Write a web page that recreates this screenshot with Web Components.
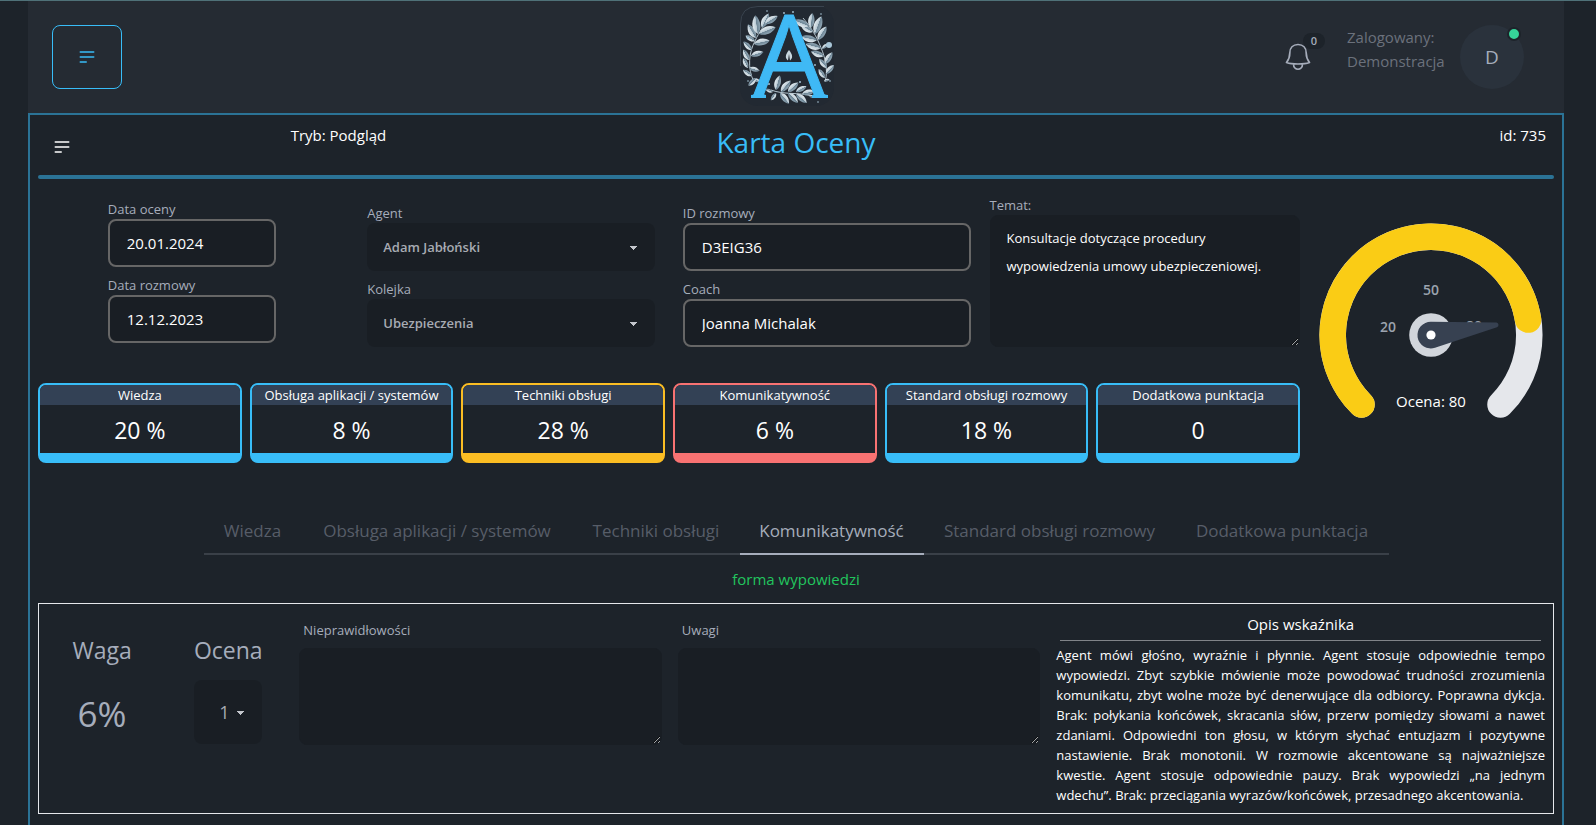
<!DOCTYPE html>
<html lang="pl">
<head>
<meta charset="utf-8">
<meta name="viewport" content="width=device-width, initial-scale=1">
<title>Karta Oceny</title>
<style>
  :root {
    --base: #1d232a;
    --field: #191e24;
    --bar: #252b33;
    --text: #a6adbb;
    --sky: #38bdf8;
    --frame: #2b7396;
  }
  html, body { margin: 0; }
  body {
    min-height: 100vh;
    box-sizing: border-box;
    display: flex;
    border-top: 1px solid #4f7178;
    background: var(--base);
    color: var(--text);
    font-family: "Open Sans", "Noto Sans", sans-serif;
    font-size: 15px;
    line-height: 24px;
  }
</style>
</head>
<body>
<evaluation-app></evaluation-app>

<script>
const define = (name, html, setup) => {
  const template = document.createElement('template');
  template.innerHTML = '<style>*{box-sizing:border-box}:host{display:block}</style>' + html;
  customElements.define(name, class extends HTMLElement {
    constructor() {
      super();
      this.attachShadow({ mode: 'open' }).append(template.content.cloneNode(true));
    }
    connectedCallback() {
      if (setup && !this.ready) { this.ready = true; setup(this, this.shadowRoot); }
    }
  });
};

/* Three-line menu icon */
define('menu-icon', `
  <style>
    :host { display: block; width: 20px; height: 20px; }
    svg { display: block; }
  </style>
  <svg width="20" height="20" viewBox="0 0 24 24" fill="none" stroke="currentColor" stroke-width="2" stroke-linecap="round"><path d="M4 6h16M4 12h16M4 18h7"/></svg>`);

/* Logo: the letter A in a wreath of leaves */
define('app-logo', `
  <style>
    :host { width: 100px; height: 100px; }
    svg { display: block; overflow: visible; }
  </style>
  <svg width="100" height="100" viewBox="0 0 100 100" role="img" aria-label="Logo">
    <defs>
      <linearGradient id="leaf" x1="0" y1="0" x2="0" y2="1"><stop offset="0" stop-color="#e6eef2"/><stop offset=".5" stop-color="#b9c9d3"/><stop offset=".55" stop-color="#6d8595"/><stop offset="1" stop-color="#93a9b7"/></linearGradient>
    </defs>
    <rect x="0" y="0" width="94" height="100" rx="18" fill="#222932"/>
    <path d="M.5 60V18Q.5 .5 18 .5H84" fill="none" stroke="#39434e"/>
    <g fill="none" stroke="#b4c4ce" stroke-width="1">
      <path d="M14 76C7 62 9 46 15 35C19 26 25 18 29 13"/>
      <path d="M85 76C89 62 84 48 79 37C75 27 68 18 63 12"/>
      <path d="M31 84C44 89 58 86 72 90"/>
    </g>
    <g id="wreath" fill="url(#leaf)"></g>
    <g fill="#a9c6d8">
      <circle cx="89" cy="39" r="3"/><circle cx="8" cy="32" r="1.4"/><circle cx="27" cy="5" r=".8"/><circle cx="44" cy="7" r=".9"/><circle cx="53" cy="6" r=".9"/><circle cx="8" cy="75" r=".8"/><circle cx="75" cy="59" r=".9"/><circle cx="29" cy="78" r="1"/><circle cx="78" cy="96" r=".8"/><circle cx="90" cy="75" r=".8"/><circle cx="81" cy="8" r=".8"/><circle cx="60" cy="76" r="1"/>
    </g>
    <text x="49" y="91" text-anchor="middle" font-family="Open Sans, sans-serif" font-size="114" font-weight="500" fill="#3fb9f5" stroke="#3fb9f5" stroke-width="1">A</text>
    <path d="M11 92V89Q15 89 17 86H24Q23 89 26 89V92ZM88 92V89Q84 89 82 86H73Q75 89 72 89V92Z" fill="#3fb9f5"/>
    <path d="M49 44C45 49 45 52 48 54.500L49 48L50 54.500C53 52 53 49 49 44Z" fill="#c9d8e0"/>
  </svg>`, (host, root) => {
  // x, y of the leaf's base, angle in degrees, length
  const leaves = [
    [16,32,-120,16],[18,28,-98,19],[22,22,-65,16],[25,18,-32,15],[15,35,-150,11],[19,28,-22,18],
    [12,44,-135,12],[14,38,-12,16],[9,54,-118,12],[11,50,-18,13],[8,62,-115,11],[9,62,15,11],[12,70,-145,11],[13,73,20,8],[16,72,135,11],
    [73,26,-150,14],[69,20,-158,16],[71,22,-85,15],[75,28,-70,19],[78,34,-58,16],[77,34,-168,16],
    [81,42,-165,16],[82,43,-40,8],[84,50,-160,14],[85,58,-58,14],[87,62,-130,12],[86,68,-48,12],[85,72,-125,11],[84,75,-15,6],
    [36,84,-75,15],[41,86,-50,15],[48,86,-42,14],[33,86,-160,8],[36,87,125,9],[40,87,50,14],[48,87,45,14],[56,86,-28,12],[56,88,40,14],[62,88,-12,13],[69,90,10,7]
  ];
  const ns = 'http://www.w3.org/2000/svg';
  for (const [x, y, angle, len] of leaves) {
    const p = document.createElementNS(ns, 'path');
    p.setAttribute('d', 'M0 0C3 -4 9 -4 13 0C9 3.500 3 3 0 0Z');
    p.setAttribute('transform', `translate(${x} ${y}) rotate(${angle}) scale(${len / 13})`);
    root.getElementById('wreath').append(p);
  }
});

define('app-header', `
  <style>
    :host { display: grid; grid-template-columns: 1fr auto 1fr; align-items: center; height: 112px; padding: 0 32px 0 24px; background: var(--bar); }
    .menu { display: grid; place-items: center; width: 70px; height: 64px; padding: 0; border: 1px solid var(--sky); border-radius: 8px; background: none; color: var(--sky); }
    app-logo { margin: 0 4px 2px 0; }
    .user { display: flex; justify-content: flex-end; align-items: center; margin-right: 8px; }
    .bell { position: relative; width: 32px; height: 32px; margin-right: 33px; padding: 0; border: 0; background: none; color: var(--text); }
    .bell svg { display: block; margin: auto; }
    .count { position: absolute; left: 21px; top: -8px; width: 22px; height: 16px; border-radius: 8px; background: var(--base); font: 600 11px/16px "Open Sans", sans-serif; text-align: center; }
    .name { width: 97px; margin-right: 16px; padding-bottom: 16px; color: #6b717c; }
    .avatar { position: relative; display: grid; place-items: center; width: 64px; height: 64px; border-radius: 50%; background: #2a323c; font-size: 19px; }
    .avatar::after { content: ""; position: absolute; right: 3px; top: 2px; box-sizing: content-box; width: 10px; height: 10px; border: 2px solid var(--base); border-radius: 50%; background: #36d399; }
  </style>
  <button class="menu" aria-label="Menu"><menu-icon></menu-icon></button>
  <app-logo></app-logo>
  <div class="user">
    <button class="bell" aria-label="Powiadomienia">
      <svg width="26" height="28" viewBox="0 0 26 28" fill="none" stroke="currentColor" stroke-width="1.700" stroke-linejoin="round"><path d="M13 1.500C8 1.500 4.800 5 4.800 10C4.800 15 3.500 17 1.500 19.500C5 20.800 9 21 13 21C17 21 21 20.800 24.500 19.500C22.500 17 21.200 15 21.200 10C21.200 5 18 1.500 13 1.500ZM8.500 21C8.500 28 17.500 28 17.500 21"/></svg>
      <span class="count">0</span>
    </button>
    <div class="name">Zalogowany:<br>Demonstracja</div>
    <div class="avatar">D</div>
  </div>`);

define('text-field', `
  <style>
    label { display: block; height: 20px; font-size: 13px; line-height: 20px; }
    input { display: block; width: 100%; height: 48px; padding: 0 17px; border: 2px solid #666; border-radius: 8px; background: var(--field); color: #fff; font: 15px/24px "Open Sans", sans-serif; }
  </style>
  <label for="c"></label><input id="c" type="text" readonly>`, (host, root) => {
  root.querySelector('label').textContent = host.getAttribute('label');
  root.querySelector('input').value = host.getAttribute('value');
});

define('select-field', `
  <style>
    label { display: block; height: 20px; font-size: 13px; line-height: 20px; }
    select {
      display: block; appearance: none; width: 100%; height: 48px; padding: 0 40px 0 16px; border: 0; border-radius: 8px;
      background-color: var(--field); color: #a7abb3; font: 600 13px/20px "Open Sans", sans-serif;
      background-image: linear-gradient(45deg, transparent 50%, #c3c6cc 50%), linear-gradient(135deg, #c3c6cc 50%, transparent 50%);
      background-position: calc(100% - 21px) calc(50% + 1px), calc(100% - 17px) calc(50% + 1px);
      background-size: 4px 4px; background-repeat: no-repeat;
    }
    :host([large]) label { height: 32px; margin-bottom: 14px; font-size: 23px; line-height: 32px; }
    :host([large]) select { width: 68px; height: 64px; margin: auto; padding: 0 0 0 25px; font-size: 18px; font-weight: 400; }
  </style>
  <label for="c"></label><select id="c"><option></option></select>`, (host, root) => {
  root.querySelector('label').textContent = host.getAttribute('label');
  root.querySelector('option').textContent = host.getAttribute('value');
});

define('note-field', `
  <style>
    label { display: block; height: 20px; font-size: 13px; line-height: 20px; }
    textarea { display: block; width: 100%; height: 132px; padding: 8px 16px; border: 1px solid var(--field); border-radius: 8px; background: var(--field); color: #fff; font: 13px/28px "Open Sans", sans-serif; resize: both; }
    :host([roomy]) label { margin-bottom: 8px; padding-left: 4px; }
    :host([roomy]) textarea { height: 97px; }
  </style>
  <label for="c"></label><textarea id="c"></textarea>`, (host, root) => {
  root.querySelector('label').textContent = host.getAttribute('label');
  root.querySelector('textarea').value = host.getAttribute('value') || '';
});

define('score-card', `
  <style>
    :host { --tone: #38bdf8; border: 2px solid var(--tone); border-bottom-width: 10px; border-radius: 8px; overflow: hidden; color: #fff; text-align: center; }
    :host([tone="warning"]) { --tone: #fbbd23; }
    :host([tone="error"]) { --tone: #f87272; }
    .name { height: 20px; background: #334155; font-size: 13px; line-height: 20px; white-space: nowrap; }
    .value { height: 48px; padding-top: 2px; font-size: 23px; line-height: 46px; }
  </style>
  <div class="name"><slot></slot></div>
  <div class="value"><slot name="value"></slot></div>`);

define('score-gauge', `
  <style>
    svg { display: block; margin: auto; }
    text { text-anchor: middle; font-family: "Open Sans", sans-serif; }
    .tick { fill: #9ca3af; font-size: 14px; font-weight: 600; }
    .sum { fill: #fff; font-size: 15px; }
  </style>
  <svg width="224" height="200" viewBox="0 0 224 200">
    <g fill="none" stroke-width="26.500" stroke-linecap="round">
      <path stroke="#e5e7eb" d="M42.500 181.500A98.300 98.300 0 1 1 181.500 181.500"/>
      <path stroke="#facc15" d="M42.500 181.500A98.300 98.300 0 1 1 209.100 96.600"/>
    </g>
    <text class="tick" x="112" y="72">50</text>
    <text class="tick" x="69" y="109">20</text>
    <text class="tick" x="155" y="108">80</text>
    <circle cx="112" cy="112" r="21.800" fill="#d1d5db"/>
    <path fill="#374151" d="M112 98.800L177.500 99.600A2.400 2.400 0 0 1 178 104.200L116 124.700A13.300 13.300 0 1 1 112 98.800Z"/>
    <circle cx="112" cy="112" r="4.600" fill="#fff"/>
    <text class="sum" x="112" y="184">Ocena: 80</text>
  </svg>`);

define('category-tabs', `
  <style>
    :host { width: 100%; max-width: 1185px; margin: 0 auto; }
    div { display: grid; grid-template-columns: 98fr 271fr 167fr 184fr 252fr 213fr; }
    button { height: 48px; padding: 2px 0 0; border: 0; border-bottom: 2px solid #3a4048; background: none; color: #575d68; font: 17px/24px "Open Sans", sans-serif; white-space: nowrap; }
    [aria-selected="true"] { border-color: var(--text); color: var(--text); }
  </style>
  <div role="tablist">
    <button role="tab">Wiedza</button>
    <button role="tab">Obsługa aplikacji / systemów</button>
    <button role="tab">Techniki obsługi</button>
    <button role="tab" aria-selected="true">Komunikatywność</button>
    <button role="tab">Standard obsługi rozmowy</button>
    <button role="tab">Dodatkowa punktacja</button>
  </div>`);

define('indicator-row', `
  <style>
    :host { display: grid; grid-template-columns: 1fr 1fr 3fr 3fr 4fr; border: 1px solid #e5e7eb; }
    .weight, .grade { padding-top: 30px; text-align: center; }
    .weight span { display: block; font-size: 23px; line-height: 32px; }
    .weight strong { display: block; margin-top: 28px; font-size: 35px; font-weight: 400; line-height: 40px; }
    .note { padding: 16px 8px 0; }
    section { padding: 8px; color: #fff; }
    h3 { margin: 0; font-size: 15px; font-weight: 400; line-height: 24px; text-align: center; }
    hr { height: 1px; margin: 4px; border: 0; background: #808388; }
    p { margin: 0; font-size: 13px; line-height: 20px; text-align: justify; }
  </style>
  <div class="weight"><span>Waga</span><strong>6%</strong></div>
  <div class="grade"><select-field large label="Ocena" value="1"></select-field></div>
  <div class="note"><note-field roomy label="Nieprawidłowości"></note-field></div>
  <div class="note"><note-field roomy label="Uwagi"></note-field></div>
  <section>
    <h3>Opis wskaźnika</h3>
    <hr>
    <p>Agent mówi głośno, wyraźnie i płynnie. Agent stosuje odpowiednie tempo wypowiedzi. Zbyt szybkie mówienie może powodować trudności zrozumienia komunikatu, zbyt wolne może być denerwujące dla odbiorcy. Poprawna dykcja. Brak: połykania końcówek, skracania słów, przerw pomiędzy słowami a nawet zdaniami. Odpowiedni ton głosu, w którym słychać entuzjazm i pozytywne nastawienie. Brak monotonii. W rozmowie akcentowane są najważniejsze kwestie. Agent stosuje odpowiednie pauzy. Brak wypowiedzi „na jednym wdechu”. Brak: przeciągania wyrazów/końcówek, przesadnego akcentowania.</p>
  </section>`);

define('evaluation-card', `
  <style>
    :host { padding: 8px 8px 11px; border: 2px solid var(--frame); border-bottom: 0; }
    header { display: grid; grid-template-columns: 1fr 1fr 1fr; padding-bottom: 4px; color: #fff; }
    .rule { height: 4px; border-radius: 2px; background: var(--frame); }
    .mode { display: grid; grid-template-columns: 1fr 1fr; }
    .mode button { display: grid; place-items: center; width: 48px; height: 48px; padding: 0; border: 0; background: none; color: #fff; }
    h1 { margin: 0; color: var(--sky); font-size: 28px; font-weight: 400; line-height: 38px; text-align: center; }
    .id { padding-right: 8px; text-align: right; }
    .summary { display: grid; grid-template-columns: minmax(0, 1fr) 254px; margin-top: 16px; }
    .fields { display: grid; grid-template-columns: repeat(4, 1fr); }
    .pair { display: flex; flex-direction: column; gap: 8px; width: 288px; max-width: 100%; margin: 8px auto 0; }
    .dates { width: 176px; margin-top: 4px; padding-right: 8px; }
    .topic { padding-left: 5px; }
    .cards { display: grid; grid-template-columns: repeat(6, 1fr); gap: 8px; margin-top: 36px; }
    score-gauge { padding: 28px 0 0 7px; }
    category-tabs { margin-top: 44px; }
    h2 { margin: 12px 0; color: #22c55e; font-size: 15px; font-weight: 400; line-height: 24px; text-align: center; }
  </style>
  <header>
    <div class="mode"><button aria-label="Menu karty"><menu-icon></menu-icon></button><span>Tryb: Podgląd</span></div>
    <h1>Karta Oceny</h1>
    <div class="id">id: 735</div>
  </header>
  <div class="rule"></div>
  <div class="summary">
    <div>
      <div class="fields">
        <div class="pair dates">
          <text-field label="Data oceny" value="20.01.2024"></text-field>
          <text-field label="Data rozmowy" value="12.12.2023"></text-field>
        </div>
        <div class="pair">
          <select-field label="Agent" value="Adam Jabłoński"></select-field>
          <select-field label="Kolejka" value="Ubezpieczenia"></select-field>
        </div>
        <div class="pair">
          <text-field label="ID rozmowy" value="D3EIG36"></text-field>
          <text-field label="Coach" value="Joanna Michalak"></text-field>
        </div>
        <note-field class="topic" label="Temat:" value="Konsultacje dotyczące procedury wypowiedzenia umowy ubezpieczeniowej."></note-field>
      </div>
      <div class="cards">
        <score-card>Wiedza<span slot="value">20 %</span></score-card>
        <score-card>Obsługa aplikacji / systemów<span slot="value">8 %</span></score-card>
        <score-card tone="warning">Techniki obsługi<span slot="value">28 %</span></score-card>
        <score-card tone="error">Komunikatywność<span slot="value">6 %</span></score-card>
        <score-card>Standard obsługi rozmowy<span slot="value">18 %</span></score-card>
        <score-card>Dodatkowa punktacja<span slot="value">0</span></score-card>
      </div>
    </div>
    <score-gauge></score-gauge>
  </div>
  <category-tabs></category-tabs>
  <h2>forma wypowiedzi</h2>
  <indicator-row></indicator-row>`);

define('evaluation-app', `
  <style>
    :host { flex: 1; display: flex; flex-direction: column; padding: 0 32px 0 28px; }
    evaluation-card { flex: 1; }
  </style>
  <app-header></app-header>
  <evaluation-card></evaluation-card>`);
</script>
</body>
</html>
